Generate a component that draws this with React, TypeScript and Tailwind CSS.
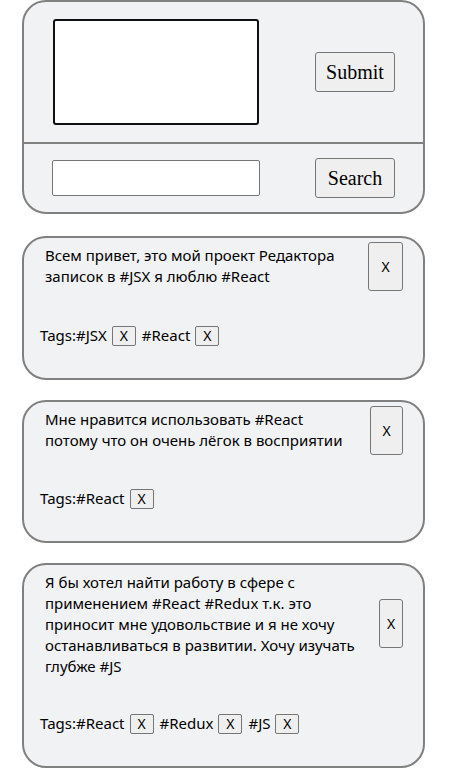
import React from "react";

const sans = { fontFamily: '"Noto Sans", "Open Sans", sans-serif' };

function TagBtn() {
  return (
    <button className="ml-[5px] mr-[6px] inline-flex h-[20px] w-[24px] items-center justify-center rounded-[2px] border border-[#767676] bg-[#efefef] text-[14px] leading-none text-black align-middle">
      X
    </button>
  );
}

function Note({
  lines,
  tags,
  btnW,
  extraTop,
  tagsTop,
}: {
  lines: string[];
  tags: string[];
  btnW: string;
  extraTop: string;
  tagsTop: string;
}) {
  return (
    <div
      className="w-[403px] rounded-[24px] border-2 border-[#808080] bg-[#f1f2f4] pl-[16px] pr-[20px] pt-[4px] pb-[32px] text-black"
      style={sans}
    >
      <div className="flex items-center justify-between">
        <div className={`pl-[5px] text-[15px] leading-[21px] ${extraTop}`}>
          {lines.map((l, i) => (
            <div key={i} className="whitespace-nowrap">
              {l}
            </div>
          ))}
        </div>
        <button
          className={`${btnW} h-[49px] shrink-0 rounded-[3px] border border-[#767676] bg-[#efefef] text-[14px] text-black`}
        >
          X
        </button>
      </div>
      <div className={`${tagsTop} flex items-center text-[15px] leading-[21px]`}>
        <span>Tags:</span>
        {tags.map((t, i) => (
          <React.Fragment key={i}>
            <span>{t}</span>
            <TagBtn />
          </React.Fragment>
        ))}
      </div>
    </div>
  );
}

export default function App() {
  const serif = { fontFamily: '"Liberation Serif", "Times New Roman", serif' };
  return (
    <div className="min-h-[778px] bg-white px-[22px]">
      <div className="w-[403px] rounded-[24px] border-2 border-[#808080] bg-[#f1f2f4]">
        <div className="flex h-[140px] items-center justify-between pl-[29px] pr-[28px]">
          <textarea
            autoFocus
            className="h-[106px] w-[206px] resize-none rounded-[3px] border-2 border-[#101010] bg-white outline-none"
          />
          <button
            className="h-[40px] w-[80px] rounded-[3px] border border-[#767676] bg-[#efefef] text-[20px] text-black"
            style={serif}
          >
            Submit
          </button>
        </div>
        <div className="h-[2px] bg-[#808080]" />
        <div className="flex h-[68px] items-center justify-between pl-[28px] pr-[28px]">
          <input className="h-[36px] w-[208px] rounded-[2px] border border-[#767676] bg-white outline-none" />
          <button
            className="h-[40px] w-[80px] rounded-[3px] border border-[#767676] bg-[#efefef] text-[20px] text-black"
            style={serif}
          >
            Search
          </button>
        </div>
      </div>
      <div className="mt-[22px] flex flex-col gap-[20px]">
        <Note
          lines={["Всем привет, это мой проект Редактора", "записок в #JSX я люблю #React"]}
          tags={["#JSX", "#React"]}
          btnW="w-[35px]"
          extraTop="-mt-[1px]"
          tagsTop="mt-[34px]"
        />
        <Note
          lines={["Мне нравится использовать #React", "потому что он очень лёгок в восприятии"]}
          tags={["#React"]}
          btnW="w-[33px]"
          extraTop="-mt-[1px]"
          tagsTop="mt-[33px]"
        />
        <Note
          lines={[
            "Я бы хотел найти работу в сфере с",
            "применением #React #Redux т.к. это",
            "приносит мне удовольствие и я не хочу",
            "останавливаться в развитии. Хочу изучать",
            "глубже #JS",
          ]}
          tags={["#React", "#Redux", "#JS"]}
          btnW="w-[24px]"
          extraTop="mt-[3px]"
          tagsTop="mt-[36px]"
        />
      </div>
    </div>
  );
}
